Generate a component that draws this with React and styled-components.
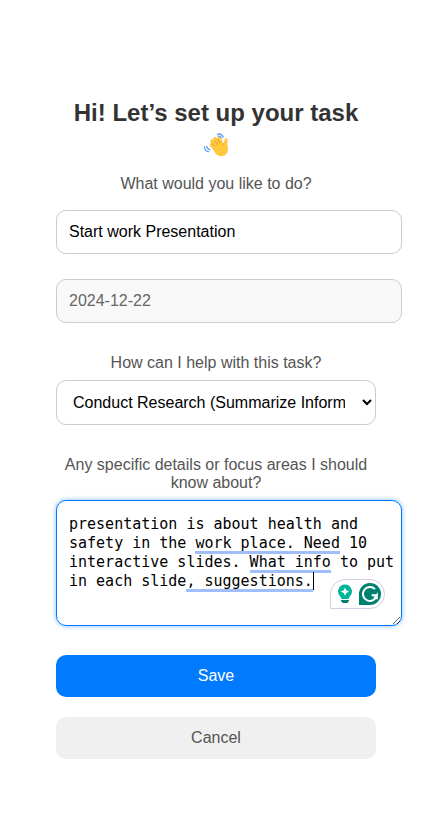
import React, { useState } from "react";
import styled, { createGlobalStyle, css } from "styled-components";

const GlobalStyle = createGlobalStyle`
  body {
    margin: 0;
    background: #ffffff;
    font-family: "Liberation Sans", Arial, sans-serif;
    font-size: 16px;
  }
`;

const Page = styled.main`
  box-sizing: border-box;
  min-height: 100vh;
  padding: 97px 56px 40px;
`;

const Form = styled.form`
  display: flex;
  flex-direction: column;
  text-align: center;
`;

const Title = styled.h1`
  margin: 0 0 14px;
  color: #333333;
  font-size: 24px;
  line-height: 32px;
`;

const WaveIcon = styled.svg`
  display: block;
  width: 26px;
  height: 26px;
  margin: 3px auto;
`;

const Label = styled.label`
  color: #555555;
  line-height: 18px;
  margin-top: ${(p) => p.$above || 0}px;
  margin-bottom: ${(p) => p.$below || 8}px;
`;

const fieldBase = css`
  box-sizing: content-box;
  padding: 12px;
  border: 1px solid #cccccc;
  border-radius: 10px;
  background: #ffffff;
  color: #000000;
  outline: none;
`;

const TextInput = styled.input`
  ${fieldBase}
  width: 100%;
  height: 18px;
  margin: 0 0 25px;
  font: 16px "Liberation Sans", Arial, sans-serif;

  &:disabled {
    background: #f9f9f9;
    color: #666666;
  }
`;

const Select = styled.select`
  ${fieldBase}
  box-sizing: border-box;
  width: 100%;
  height: 45px;
  margin: 0 0 31px;
  padding-right: 14px;
  font: 16px "Liberation Sans", Arial, sans-serif;
`;

const editorFont = css`
  font: 15px/19px "DejaVu Sans Mono", monospace;
`;

const Editor = styled.div`
  ${editorFont}
  position: relative;
  width: calc(100% + 26px);
  margin-bottom: 29px;
`;

const TextArea = styled.textarea`
  ${editorFont}
  display: block;
  box-sizing: border-box;
  width: 100%;
  height: 126px;
  margin: 0;
  padding: 14px 4px 12px 12px;
  border: 1px solid #007bff;
  border-radius: 10px;
  background: #ffffff;
  color: #000000;
  caret-color: transparent;
  outline: none;
  overflow: hidden;
  resize: vertical;
  box-shadow: 0 0 5px rgba(0, 123, 255, 0.5);
`;

/* Marks are placed by text line and by character column. */
const markPlace = css`
  position: absolute;
  top: ${(p) => 15 + p.$line * 19}px;
  left: calc(13px + ${(p) => p.$column}ch);
  box-sizing: border-box;
  height: 20px;
  pointer-events: none;
`;

const Underline = styled.span`
  ${markPlace}
  width: ${(p) => p.$length}ch;
  border-bottom: 3px solid #a0bffa;
`;

const Caret = styled.span`
  ${markPlace}
  height: 18px;
  border-left: 1px solid #000000;
`;

const Assistant = styled.div`
  position: absolute;
  right: 17px;
  bottom: 17px;
  display: flex;
  align-items: center;
  gap: 6px;
  box-sizing: border-box;
  height: 30px;
  padding: 0 3px 0 6px;
  border: 1px solid #cfd1e0;
  border-radius: 15px 15px 15px 0;
  background: #ffffff;
`;

const AssistantButton = styled.button`
  display: flex;
  padding: 0;
  border: 0;
  background: none;
`;

const Button = styled.button`
  height: 42px;
  margin: 0 0 20px;
  padding: 12px;
  border: 0;
  border-radius: 10px;
  background: ${(p) => (p.$primary ? "#007bff" : "#f0f0f0")};
  color: ${(p) => (p.$primary ? "#ffffff" : "#555555")};
  font: 16px/18px "Liberation Sans", Arial, sans-serif;
  cursor: pointer;
`;

function Wave() {
  return (
    <WaveIcon viewBox="0 0 26 26" role="img" aria-label="Waving hand">
      <g fill="none" stroke="#ffc83d" strokeLinecap="round">
        <path d="M8.8 13 15 20" strokeWidth="4" />
        <path d="M9.2 9.2 16 17" strokeWidth="3.8" />
        <path d="M12 6.8 18 15" strokeWidth="3.8" />
        <path d="M16 6.6 20 14" strokeWidth="3.4" />
        <path d="M23.2 7.8Q22.2 11 23.2 17" strokeWidth="3" />
      </g>
      <path
        d="M8 14 14 8 20.4 11.4 24.7 14.5Q25.6 20 22.7 22.5C19.6 25 15.6 24.6 12.6 21.5Z"
        fill="#ffc83d"
      />
      <g fill="none" stroke="#e09a2c" strokeWidth="0.9" strokeLinecap="round">
        <path d="m8.8 11.2 2.8 3M11.4 8.6l3 3.6M14.5 7.2l2.4 3.8M20.2 12.6q.4-1.4 1.2-2.2" />
      </g>
      <g fill="none" stroke="#5092ff" strokeWidth="1.1" strokeLinecap="round">
        <path d="M1.4 14.8q.4 4.6 4.4 5M3.6 14.2q.4 2.8 3.3 3.5M14.2 2.2q4.2-1.4 6 3M14.8 4.2q2.5-.7 3.5 1.7" />
      </g>
    </WaveIcon>
  );
}

function Bulb() {
  return (
    <svg width="16" height="20" viewBox="0 0 16 20" aria-hidden="true">
      <path
        d="M8 0.5a7 7 0 0 0-4.4 12.4l1 2.1h6.8l1-2.1A7 7 0 0 0 8 .5Z"
        fill="#00b598"
      />
      <path
        d="M8 3.4 9.3 6.3 12.2 7.6 9.3 8.9 8 11.8 6.7 8.9 3.8 7.6 6.7 6.3Z"
        fill="#ffffff"
      />
      <path d="M4 16h8v1l-1.7 1.9H5.7L4 17Z" fill="#00806f" />
    </svg>
  );
}

function GrammarLogo() {
  return (
    <svg width="22" height="22" viewBox="0 0 22 22" aria-hidden="true">
      <path d="M0 22V11A11 11 0 1 1 11 22Z" fill="#00806f" />
      <path
        d="M16 6.1A7 7 0 1 0 17.8 12.3H12.6M15.2 15.7 17.8 12.3V16.2"
        fill="none"
        stroke="#ffffff"
        strokeWidth="2"
      />
    </svg>
  );
}

export default function App() {
  const [task, setTask] = useState("Start work Presentation");
  const [details, setDetails] = useState(
    "presentation is about health and safety in the work place. Need 10 interactive slides. What info to put in each slide, suggestions."
  );

  return (
    <>
      <GlobalStyle />
      <Page>
        <Form onSubmit={(e) => e.preventDefault()}>
          <Title>
            Hi! Let’s set up your task
            <Wave />
          </Title>

          <Label htmlFor="task" $below={17}>What would you like to do?</Label>
          <TextInput id="task" value={task} onChange={(e) => setTask(e.target.value)} />
          <TextInput aria-label="Date" value="2024-12-22" disabled readOnly />

          <Label htmlFor="help" $above={6}>How can I help with this task?</Label>
          <Select id="help">
            <option>Conduct Research (Summarize Information)</option>
          </Select>

          <Label htmlFor="details">
            Any specific details or focus areas I should know about?
          </Label>
          <Editor>
            <TextArea
              id="details"
              spellCheck={false}
              value={details}
              onChange={(e) => setDetails(e.target.value)}
            />
            <Underline $line={1} $column={14} $length={16} />
            <Underline $line={2} $column={20} $length={9} />
            <Underline $line={3} $column={13} $length={14} />
            <Caret $line={3} $column={27} />
            <Assistant>
              <AssistantButton type="button" aria-label="Writing ideas">
                <Bulb />
              </AssistantButton>
              <AssistantButton type="button" aria-label="Check grammar">
                <GrammarLogo />
              </AssistantButton>
            </Assistant>
          </Editor>

          <Button type="submit" $primary>Save</Button>
          <Button type="button">Cancel</Button>
        </Form>
      </Page>
    </>
  );
}
